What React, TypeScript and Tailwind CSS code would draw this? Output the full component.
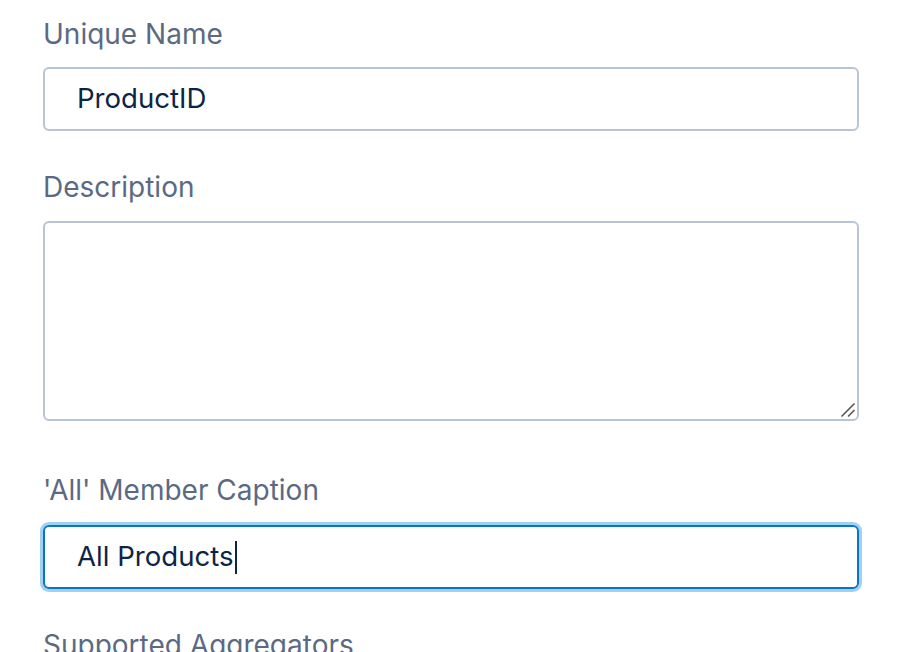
import React from "react";

export default function App() {
  return (
    <div
      className="min-h-screen bg-white pt-[14px] pl-[43px] pr-[60px] overflow-hidden"
      style={{ fontFamily: "Inter, 'Noto Sans', sans-serif" }}
    >
      <label className="block text-[28px] leading-[40px] text-[#5b6a82] mb-[13px]">Unique Name</label>
      <div className="h-[64px] border-2 border-[#b9c5d4] rounded-[6px] pl-[32px] flex items-center text-[27.6px] text-[#0e2445]">
        ProductID
      </div>

      <label className="block text-[28px] leading-[40px] text-[#5b6a82] mt-[36px] mb-[14px]">Description</label>
      <div className="relative">
        <textarea
          className="block w-full h-[200px] border-2 border-[#b9c5d4] rounded-[6px] resize-none outline-none"
          defaultValue=""
        />
        <svg className="absolute right-[3px] bottom-[3px]" width="16" height="16" viewBox="0 0 16 16">
          <line x1="1.5" y1="14.5" x2="14.5" y2="1.5" stroke="#555" strokeWidth="1.6" />
          <line x1="8" y1="14.5" x2="14.5" y2="8" stroke="#555" strokeWidth="1.6" />
        </svg>
      </div>

      <label className="block text-[28px] leading-[40px] text-[#5b6a82] mt-[49px] mb-[15px]">'All' Member Caption</label>
      <div className="h-[64px] border-2 border-[#0a74c8] rounded-[6px] pl-[32px] flex items-center text-[27.6px] text-[#0e2445] shadow-[0_0_0_3px_#9fd1f1]">
        <span>All Products</span>
        <span className="inline-block w-[2px] h-[33px] bg-[#0e2445] ml-[1px]" />
      </div>

      <label className="block text-[28px] leading-[40px] text-[#5b6a82] mt-[36px]">Supported Aggregators</label>
    </div>
  );
}
